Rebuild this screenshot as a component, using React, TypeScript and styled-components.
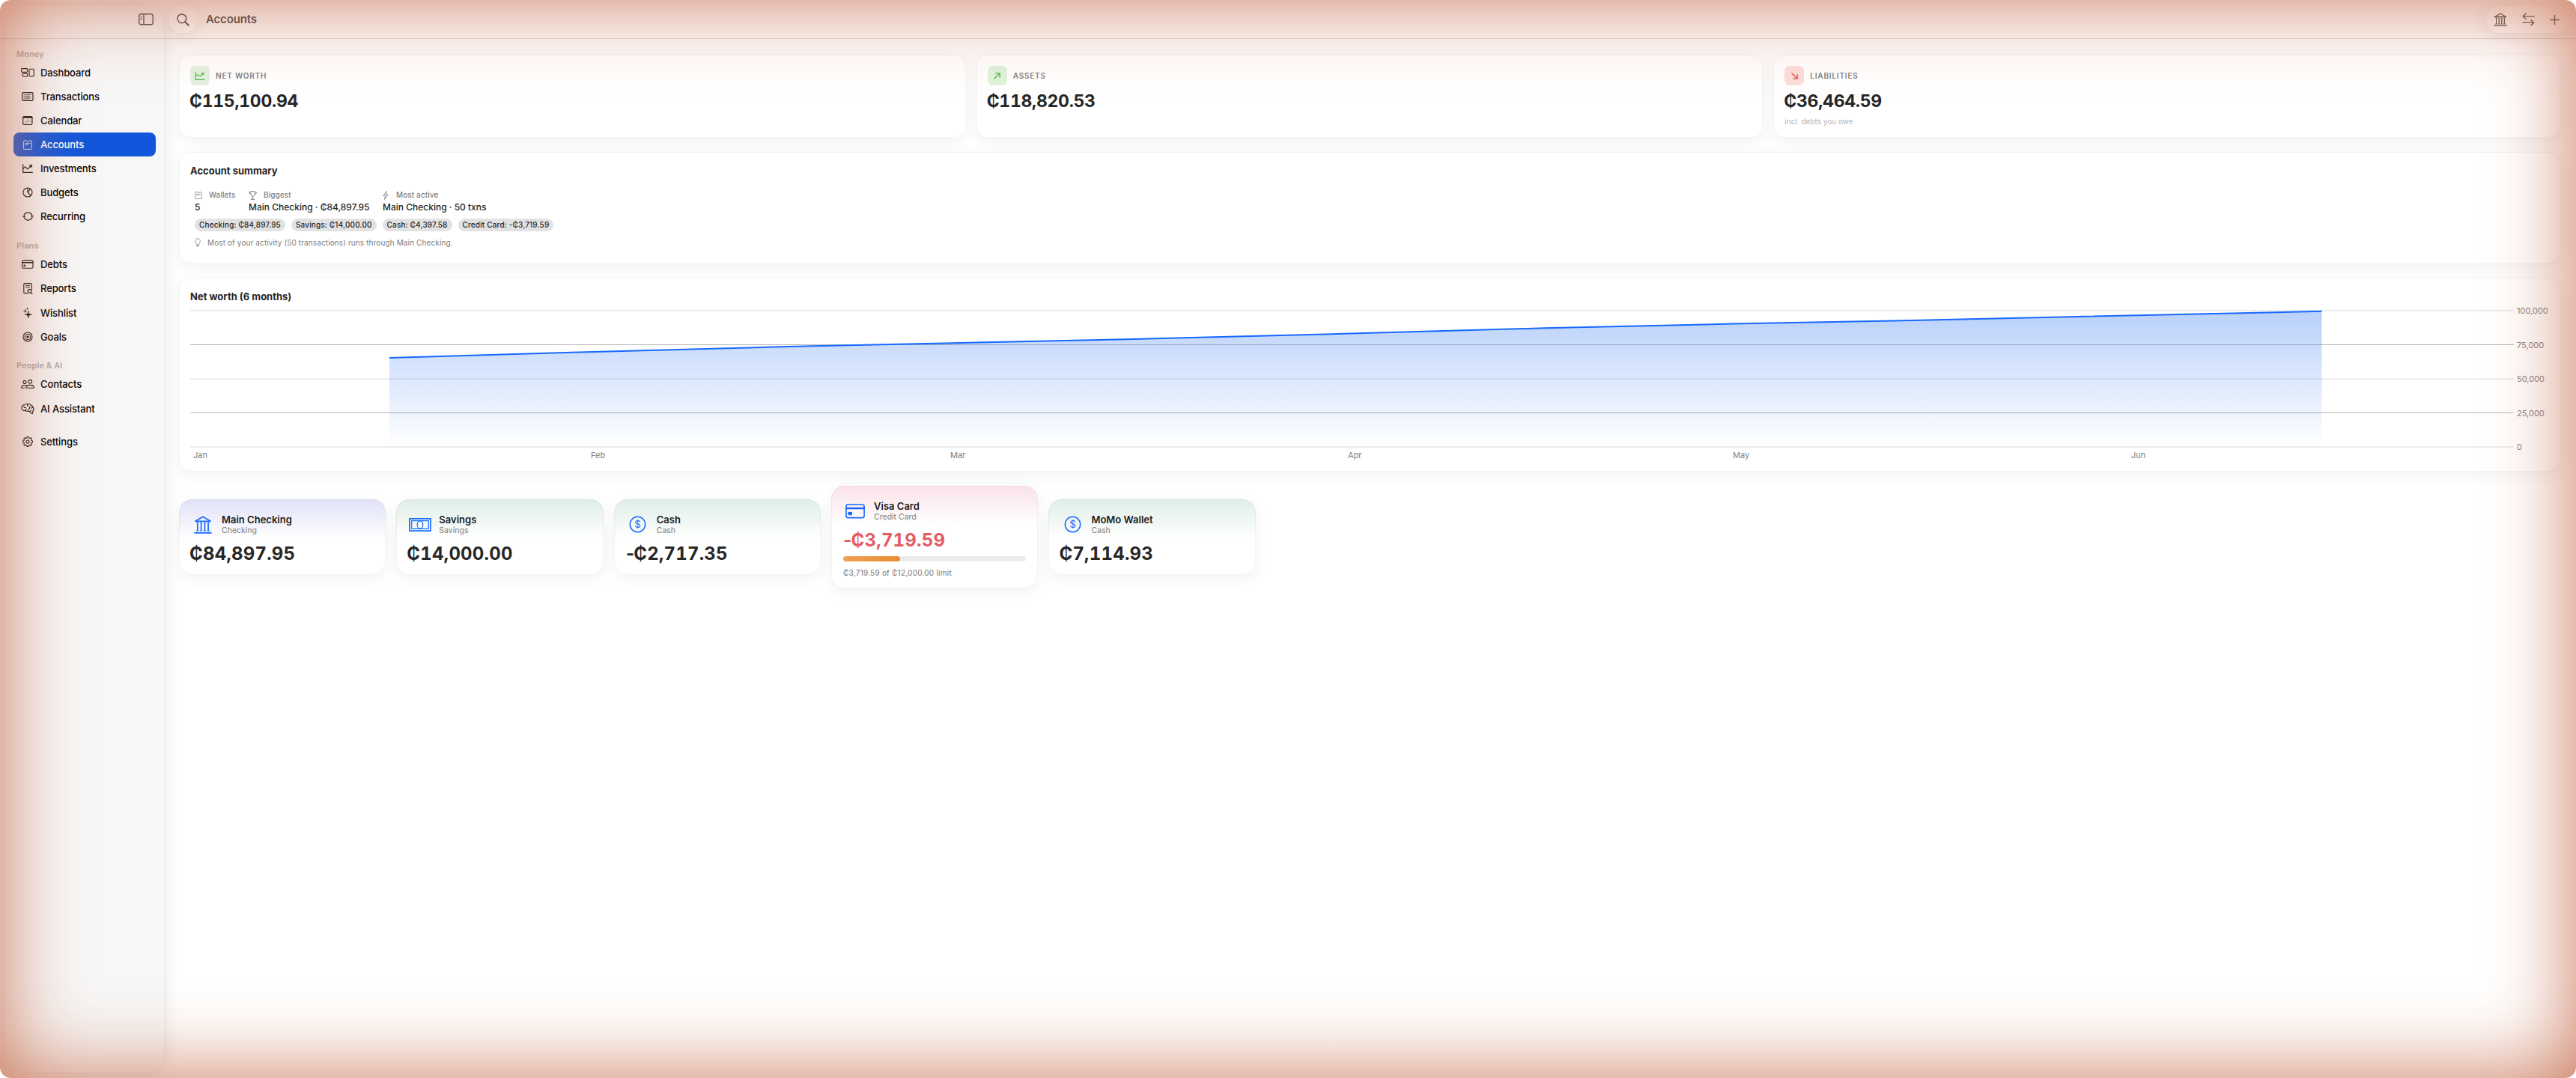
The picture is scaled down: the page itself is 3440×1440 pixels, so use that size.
import React, { FC, ReactNode } from "react";
import styled, { createGlobalStyle, css } from "styled-components";

const GlobalStyle = createGlobalStyle`
	* {
		box-sizing: border-box;
	}
	body {
		margin: 0;
		background: #fff;
		font-family: Inter, "Liberation Sans", sans-serif;
		color: #262626;
	}
`;

/* ---------- icons ---------- */

const Svg = styled.svg<{ $w: number; $h: number }>`
	display: block;
	flex: none;
	width: ${(p) => p.$w}px;
	height: ${(p) => p.$h}px;
	fill: none;
	stroke: currentColor;
	stroke-linecap: round;
	stroke-linejoin: round;
	overflow: visible;
`;

type IconProps = { w: number; h: number; sw?: number };

const icon =
	(viewBox: string, body: ReactNode, defaultStroke = 1.2): FC<IconProps> =>
	({ w, h, sw }) => (
		<Svg $w={w} $h={h} viewBox={viewBox} strokeWidth={sw ?? defaultStroke}>
			{body}
		</Svg>
	);

const SidebarIcon = icon(
	"0 0 20 16",
	<>
		<rect x='0.8' y='0.8' width='18.4' height='14' rx='2.6' />
		<path d='M7 1v13.6' />
		<path d='M3 4h1.6M3 6.3h1.6M3 8.6h1.6' strokeWidth='0.9' />
	</>,
	1.4
);
const SearchIcon = icon(
	"0 0 17 17",
	<>
		<circle cx='6.8' cy='6.8' r='5.9' />
		<path d='M11.2 11.2l4.6 4.6' strokeWidth='2' />
	</>,
	1.5
);
const DashboardIcon = icon(
	"0 0 18 12",
	<>
		<rect x='0.6' y='0.6' width='8' height='4.8' rx='0.9' />
		<rect x='2.2' y='7.4' width='6.4' height='3.8' rx='0.9' />
		<rect x='11' y='1.2' width='6.2' height='9.8' rx='0.9' />
	</>,
	1.1
);
const TransactionsIcon = icon(
	"0 0 16 12",
	<>
		<rect x='0.6' y='0.6' width='14.4' height='10.8' rx='1.4' />
		<path d='M3 3.4h1M5.4 3.4h7M3 5.2h1M5.4 5.2h5M3 7h1M5.4 7h7M3 8.8h1M5.4 8.8h5' strokeWidth='0.7' />
	</>,
	1.2
);
const CalendarIcon = icon(
	"0 0 14 12",
	<>
		<rect x='0.7' y='0.7' width='12.2' height='10.8' rx='1.4' />
		<path d='M1 1.8h11.6' strokeWidth='2' />
		<path d='M6 5.2h4.6M3.2 7.2h7.4M3.2 9.2h5' strokeWidth='1.1' strokeDasharray='0.7 1.5' strokeLinecap='butt' />
	</>,
	1.2
);
const WalletIcon = icon(
	"0 0 12 14",
	<>
		<path d='M2.6 1.2L1.9 2.2H1.4a.8.8 0 0 0-.8.8v9.6a.8.8 0 0 0 .8.8h9.2a.8.8 0 0 0 .8-.8V3a.8.8 0 0 0-.8-.8H9.8L9.2 1.2 8.2 2.2 6 3.4 3.8 2.2z' />
		<path d='M3 5.4h6M3 7.4h3.4' strokeWidth='0.9' />
	</>,
	1
);
const ChartIcon = icon(
	"0 0 14 12",
	<>
		<path d='M0.7 0.6v10.7h12.8' />
		<path d='M1 6.4l2-2.2c.6-.6 1-.5 1.5.1l1.6 2c.5.6.9.6 1.4 0L11 3' />
		<path d='M9 1.8l4-.8-.8 3.8z' fill='currentColor' strokeWidth='0.4' />
	</>,
	1.2
);
const PieIcon = icon(
	"0 0 14 14",
	<>
		<circle cx='7' cy='7' r='6' />
		<path d='M7 1v6l4.4 4.2M7 7l3.4-4.6' />
	</>,
	1.1
);
const RecurringIcon = icon(
	"0 0 15 14",
	<>
		<path d='M2.2 5.2A5.7 5.7 0 0 1 12.6 5.2M12.8 8.6A5.7 5.7 0 0 1 2.4 8.8' />
		<path d='M12.9 8.2l-1.7-2.1h3.4zM2.1 5.8L.4 7.9h3.4z' fill='currentColor' strokeWidth='0.3' />
	</>,
	1.2
);
const CardIcon = icon(
	"0 0 16 12",
	<>
		<rect x='0.6' y='0.9' width='14.4' height='10.4' rx='1.6' />
		<path d='M0.8 3.8h14' strokeWidth='1.5' />
		<rect x='2.8' y='7' width='2' height='1.8' rx='0.4' fill='currentColor' strokeWidth='0.6' />
	</>,
	1.1
);
const ReportIcon = icon(
	"0 0 13 15",
	<>
		<path d='M5.4 13.6H2a1.2 1.2 0 0 1-1.2-1.2V1.8A1.2 1.2 0 0 1 2 .6h8a1.2 1.2 0 0 1 1.2 1.2v7' />
		<path d='M3.4 3.6h5.2M3.4 5.8h5.2' strokeWidth='0.9' />
		<circle cx='8.4' cy='11' r='2.4' />
		<path d='M10.2 12.8l1.8 1.8' />
	</>,
	1.1
);
const WishIcon = icon(
	"0 0 12 14",
	<g fill='currentColor' stroke='none'>
		<path d='M6.8 4.6C7.1 8.2 7.8 8.8 11.6 9.2 7.8 9.6 7.1 10.3 6.8 14 6.5 10.3 5.8 9.6 2 9.2 5.8 8.8 6.5 8.2 6.8 4.6z' stroke='currentColor' strokeWidth='0.7' />
		<path d='M2.5 2.4c.2 1.8.5 2 2.3 2.2-1.8.2-2.1.5-2.3 2.3C2.3 5.1 2 4.8.2 4.6 2 4.4 2.3 4.2 2.5 2.4z' stroke='currentColor' strokeWidth='0.4' />
		<path d='M5.7 0c.1 1.1.3 1.3 1.4 1.4-1.1.1-1.3.3-1.4 1.4C5.6 1.7 5.4 1.5 4.3 1.4 5.4 1.3 5.6 1.1 5.7 0z' stroke='currentColor' strokeWidth='0.3' />
	</g>
);
const GoalIcon = icon(
	"0 0 14 14",
	<>
		<circle cx='7' cy='7' r='6' />
		<circle cx='7' cy='7' r='3.8' />
		<circle cx='7' cy='7' r='1.4' fill='currentColor' strokeWidth='0.5' />
	</>,
	1.1
);
const ContactsIcon = icon(
	"0 0 18 12",
	<>
		<circle cx='5' cy='3.4' r='2' />
		<circle cx='12.2' cy='2.8' r='2.4' />
		<path d='M7.6 11.2c-.6 0-.8-.4-.7-.8.4-1.8 2.6-3 5.3-3s4.9 1.2 5.3 3c.1.4-.1.8-.7.8z' />
		<path d='M4.8 11.2H1.1c-.5 0-.7-.3-.6-.7.4-1.8 2.2-3 4.6-3 .8 0 1.5.1 2.1.4' />
	</>,
	1.1
);
const BrainIcon = icon(
	"0 0 18 14",
	<>
		<path d='M2.2 8.4C.4 7.6.3 5.6 1.5 4.6 1.4 2.8 2.9 1.7 4.5 1.9 5.8.4 8 .4 9 1.2 10.6.3 12.6.8 13.3 2.2 15 2.5 15.9 3.8 15.7 5.2 17.2 6.2 17.4 8.2 16.3 9.4' />
		<path d='M2.2 8.4C3 9.8 4.8 10 6 9.3 7 10.3 8.6 10.5 9.8 9.9 10.9 10.2 11.8 10.8 12.6 11.8L14 13.3h1.7L15.5 10.9C16 10.5 16.3 10 16.3 9.4' />
		<path d='M3.8 4.6c.6.9 1.6 1.1 2.5.7M9 1.2C8.2 2.2 8.6 3.3 9.6 3.6M6 9.3c-.2-1 .4-1.8 1.4-2M12.9 4.4c-1.2.2-1.7 1.2-1.4 2.2-.8.2-1.3.8-1.3 1.6M15.7 5.2c-.8 0-1.3.5-1.5 1.1M13.6 8.8c-.6.5-.8 1-.7 1.7' />
	</>,
	1.1
);
const gearPath = (() => {
	const pts: string[] = [];
	for (let i = 0; i < 8; i++) {
		const at = (deg: number, r: number) => {
			const a = ((i * 45 + deg) * Math.PI) / 180;
			return `${(7 + r * Math.sin(a)).toFixed(2)} ${(7 - r * Math.cos(a)).toFixed(2)}`;
		};
		pts.push(at(-16, 5.2), at(-9, 6.5), at(9, 6.5), at(16, 5.2));
	}
	return `M${pts.join("L")}Z`;
})();
const GearIcon = icon(
	"0 0 14 14",
	<>
		<path d={gearPath} />
		<circle cx='7' cy='7' r='2' />
	</>,
	1.1
);
const BankIcon = icon(
	"0 0 24 24",
	<>
		<path d='M1.8 7.2L12 1.3l10.2 5.9z' />
		<path d='M4.9 9.6v9.8M9.6 9.6v9.8M14.4 9.6v9.8M19.1 9.6v9.8' strokeWidth='1.7' />
		<path d='M3.2 9.2h3M8.2 9.2h2.6M13.2 9.2h2.6M17.8 9.2h3M3.2 20h3M8.2 20h2.6M13.2 20h2.6M17.8 20h3' strokeWidth='1' />
		<path d='M1 22.8h22' strokeWidth='1.7' />
	</>,
	1.6
);
const SwapIcon = icon(
	"0 0 18 18",
	<path d='M17 4.6H1.5M5.4.8L1.3 4.6l4.1 3.9M1 13.4h15.5M12.6 9.5l4.1 3.9-4.1 3.9' />,
	1.5
);
const PlusIcon = icon("0 0 14 14", <path d='M7 .6v12.8M.6 7h12.8' />, 1.6);
const UpRightIcon = icon("0 0 10 10", <path d='M1 9L9 1M3 1h6v6' />, 1.5);
const DownRightIcon = icon("0 0 10 10", <path d='M1 1l8 8M9 3v6H3' />, 1.5);
const TrophyIcon = icon(
	"0 0 11 12",
	<path d='M3 .6h5v3.6c0 1.8-1 3-2.5 3S3 6 3 4.2zM3 1.6H.7c0 2 1 3.2 2.5 3.4M8 1.6h2.3c0 2-1 3.2-2.5 3.4M5.5 7.2v2.4M3.2 11.2c0-1 .8-1.5 2.3-1.5s2.3.5 2.3 1.5z' />,
	0.9
);
const BoltIcon = icon("0 0 8 12", <path d='M5.2.6L.8 6.6h2.6L2.6 11.4 7.2 5.2H4.4z' />, 0.9);
const BulbIcon = icon(
	"0 0 8 12",
	<path d='M2.4 8.6C2.2 7 .7 6 .7 3.9.7 2 2.1.7 4 .7s3.3 1.3 3.3 3.2C7.3 6 5.8 7 5.6 8.6zM2.6 10.2h2.8M3.2 11.4h1.6' />,
	0.8
);
const BanknoteIcon = icon(
	"0 0 30 18",
	<>
		<rect x='0.9' y='0.9' width='28.2' height='16.2' />
		<rect x='3.7' y='3.7' width='22.6' height='10.6' strokeWidth='1.2' />
		<ellipse cx='15' cy='9' rx='3.8' ry='5.2' strokeWidth='1.2' />
	</>,
	1.7
);

const CoinText = styled.text`
	font: 400 14px Inter, sans-serif;
	fill: currentColor;
	stroke: none;
	text-anchor: middle;
`;
const CoinIcon = icon(
	"0 0 24 24",
	<>
		<circle cx='12' cy='12' r='10.6' />
		<CoinText x='12' y='17'>
			$
		</CoinText>
	</>,
	1.6
);
const CreditIcon = icon(
	"0 0 26 20",
	<>
		<rect x='0.9' y='1' width='24.2' height='17.6' rx='2.6' />
		<path d='M1 6h24' strokeWidth='2.4' />
		<rect x='4.2' y='11.5' width='4' height='3' rx='0.6' fill='currentColor' />
	</>,
	1.6
);

/* ---------- window ---------- */

const Window = styled.div`
	position: relative;
	display: flex;
	flex-direction: column;
	width: 3440px;
	height: 1440px;
	border-radius: 14px;
	overflow: hidden;
	background: #fff;
`;

/* coral halo running along the inside of the window frame */
const Glow = styled.div`
	position: absolute;
	inset: 0;
	z-index: 10;
	border-radius: 14px;
	pointer-events: none;
	box-shadow: inset 0 0 112px rgb(200, 114, 84);
`;

const SidebarPanel = styled.div`
	position: absolute;
	left: 8px;
	top: 8px;
	bottom: 8px;
	width: 210px;
	border-radius: 24px;
	border: 1px solid #fff;
	background: #f7f7f7;
	box-shadow: 0 2px 24px rgba(0, 0, 0, 0.12);
`;

const TitleBar = styled.header`
	position: relative;
	z-index: 1;
	flex: none;
	display: flex;
	align-items: flex-start;
	height: 52px;
	padding: 8px 10px 0 185px;
	border-bottom: 1px solid rgba(0, 0, 0, 0.13);
	color: #4a4a4a;
`;

const ToggleButton = styled.button`
	width: 41px;
	height: 36px;
	padding: 0;
	border: none;
	background: none;
	color: inherit;
`;

const pill = css`
	border: 1px solid rgba(255, 255, 255, 0.6);
	border-radius: 18px;
	background: rgba(255, 255, 255, 0.3);
	box-shadow: 0 4px 22px rgba(0, 0, 0, 0.09);
`;

const SearchButton = styled.button`
	${pill}
	display: flex;
	align-items: center;
	justify-content: center;
	width: 37px;
	height: 36px;
	padding: 0;
	color: inherit;
`;

const PageTitle = styled.h1`
	flex: 1;
	margin: 0 0 0 12px;
	font-size: 15px;
	line-height: 36px;
	font-weight: 600;
	letter-spacing: -0.15px;
`;

const ActionPill = styled.div`
	${pill}
	display: flex;
	align-items: center;
	justify-content: space-between;
	width: 110px;
	height: 36px;
	padding: 0 11px 0 9px;
`;

const Columns = styled.div`
	flex: 1;
	display: flex;
	min-height: 0;
`;

/* ---------- sidebar ---------- */

const Nav = styled.nav`
	position: relative;
	width: 218px;
	flex: none;
	padding: 9px 10px 0 18px;
`;

const NavHeading = styled.div<{ $gap?: number }>`
	height: 20px;
	margin-top: ${(p) => p.$gap ?? 0}px;
	padding-left: 4px;
	font-size: 11px;
	line-height: 22px;
	font-weight: 600;
	letter-spacing: 0.1px;
	color: #b0acaa;
`;

const NavItem = styled.a<{ $active?: boolean; $height?: number; $gap?: number }>`
	display: flex;
	align-items: center;
	height: ${(p) => p.$height ?? 32}px;
	margin-top: ${(p) => p.$gap ?? 0}px;
	border-radius: 8px;
	font-size: 13px;
	font-weight: 500;
	letter-spacing: -0.1px;
	color: ${(p) => (p.$active ? "#fff" : "#000")};
	background: ${(p) => (p.$active ? "#1257db" : "transparent")};
`;

const NavIcon = styled.span<{ $active?: boolean }>`
	display: flex;
	justify-content: center;
	width: 38px;
	margin-right: -2px;
	color: ${(p) => (p.$active ? "#e8eefc" : "#120c0a")};
`;

/* ---------- content ---------- */

const Main = styled.main`
	flex: 1;
	min-width: 0;
	padding: 20px 21px 0 21px;
`;

const card = css`
	border: 1px solid rgba(0, 0, 0, 0.045);
	background: #fff;
	box-shadow: 0 5px 20px rgba(0, 0, 0, 0.055);
`;

const StatGrid = styled.section`
	display: grid;
	grid-template-columns: repeat(3, 1fr);
	gap: 14px;
`;

const StatCard = styled.div`
	${card}
	height: 112px;
	padding: 15px 14px;
	border-radius: 14px;
`;

const StatHead = styled.div`
	display: flex;
	align-items: center;
	gap: 8px;
	font-size: 10px;
	font-weight: 600;
	letter-spacing: 0.8px;
	color: #808080;
`;

const Badge = styled.span<{ $bg: string; $fg: string }>`
	display: flex;
	align-items: center;
	justify-content: center;
	width: 26px;
	height: 26px;
	border-radius: 7px;
	color: ${(p) => p.$fg};
	background: ${(p) => p.$bg};
`;

const StatValue = styled.div`
	margin: 7px 0 0 -1px;
	font-size: 23px;
	line-height: 28px;
	font-weight: 700;
	font-variant-numeric: tabular-nums;
	letter-spacing: -0.3px;
`;

const StatNote = styled.div`
	margin-top: 6px;
	font-size: 10px;
	line-height: 14px;
	color: #b4b4b4;
`;

const Panel = styled.section<{ $height: number }>`
	${card}
	height: ${(p) => p.$height}px;
	margin-top: 19px;
	padding: 15px 14px;
	border-radius: 16px;
`;

const PanelTitle = styled.h2`
	margin: 0;
	font-size: 13px;
	line-height: 18px;
	font-weight: 700;
`;

const SummaryBody = styled.div`
	padding: 15px 6px 0;
`;

const Facts = styled.div`
	display: flex;
	gap: 18px;
`;

const Fact = styled.div<{ $width?: number }>`
	width: ${(p) => (p.$width ? p.$width + "px" : "auto")};
	font-size: 12px;
	line-height: 15px;
	font-weight: 500;
	white-space: nowrap;
`;

const FactLabel = styled.div<{ $gap: number }>`
	display: flex;
	align-items: center;
	gap: ${(p) => p.$gap}px;
	height: 17px;
	font-size: 10px;
	font-weight: 500;
	letter-spacing: 0.1px;
	color: #808080;
`;

const Chips = styled.div`
	display: flex;
	gap: 8px;
	margin-top: 8px;
`;

const Chip = styled.span`
	height: 17px;
	padding: 0 6px;
	border-radius: 9px;
	background: #e2e2e2;
	font-size: 10px;
	line-height: 17px;
	font-weight: 500;
	letter-spacing: 0.15px;
`;

const Tip = styled.div`
	display: flex;
	align-items: center;
	gap: 9px;
	height: 16px;
	margin-top: 7px;
	font-size: 10px;
	letter-spacing: 0.12px;
	color: #808080;
`;

const ChartSvg = styled.svg`
	display: block;
	margin-top: 2px;
	width: 3150px;
	height: 210px;
	overflow: visible;
`;

const AxisText = styled.text`
	font: 400 11px Inter, sans-serif;
	fill: #808080;
`;

/* ---------- account cards ---------- */

const AccountGrid = styled.section`
	display: grid;
	grid-template-columns: repeat(auto-fill, minmax(270px, 1fr));
	align-items: center;
	gap: 14px;
	margin-top: 19px;
`;

const AccountCard = styled.div<{ $tint: string }>`
	${card}
	padding: 18px 15px 13px 14px;
	border-radius: 18px;
	background: linear-gradient(${(p) => p.$tint}, #fff 52px) border-box;
`;

const AccountHead = styled.div`
	display: flex;
	align-items: center;
	height: 29px;
`;

const AccountIcon = styled.div`
	display: flex;
	justify-content: center;
	width: 34px;
	margin-right: 8px;
	color: #1769ff;
`;

const AccountName = styled.div`
	font-size: 13px;
	line-height: 16px;
	font-weight: 600;
	color: #1c1c1c;
`;

const AccountKind = styled.div`
	font-size: 10.5px;
	line-height: 13px;
	color: #7c7c7c;
`;

const Balance = styled.div<{ $negative?: boolean }>`
	margin: 11px 0 0 -1px;
	font-size: 24px;
	line-height: 28px;
	font-weight: 700;
	font-variant-numeric: tabular-nums;
	letter-spacing: 0.2px;
	color: ${(p) => (p.$negative ? "#e25c62" : "#262626")};
`;

const Minus = styled.span`
	letter-spacing: -3px;
`;

const Track = styled.div`
	height: 7px;
	margin: 7px 0 0 1px;
	border-radius: 3.5px;
	background: #ececec;
	overflow: hidden;
`;

const Fill = styled.div`
	height: 100%;
	border-radius: 3.5px;
	background: linear-gradient(90deg, #efa055, #ea8c30);
`;

const LimitText = styled.div`
	margin-top: 8px;
	padding-left: 1px;
	font-size: 10px;
	line-height: 14px;
	letter-spacing: 0.23px;
	color: #777;
`;

/* ---------- data ---------- */

type NavEntry = {
	label: string;
	Icon: FC<IconProps>;
	w: number;
	h: number;
	height?: number;
	gap?: number;
	active?: boolean;
};

const moneyItems: NavEntry[] = [
	{ label: "Dashboard", Icon: DashboardIcon, w: 18, h: 12 },
	{ label: "Transactions", Icon: TransactionsIcon, w: 16, h: 12 },
	{ label: "Calendar", Icon: CalendarIcon, w: 14, h: 12 },
	{ label: "Accounts", Icon: WalletIcon, w: 12, h: 14, active: true },
	{ label: "Investments", Icon: ChartIcon, w: 14, h: 12 },
	{ label: "Budgets", Icon: PieIcon, w: 14, h: 14 },
	{ label: "Recurring", Icon: RecurringIcon, w: 15, h: 14 },
];

const planItems: NavEntry[] = [
	{ label: "Debts", Icon: CardIcon, w: 16, h: 12 },
	{ label: "Reports", Icon: ReportIcon, w: 13, h: 15 },
	{ label: "Wishlist", Icon: WishIcon, w: 12, h: 14, height: 34 },
	{ label: "Goals", Icon: GoalIcon, w: 14, h: 14, height: 30 },
];

const peopleItems: NavEntry[] = [
	{ label: "Contacts", Icon: ContactsIcon, w: 18, h: 12 },
	{ label: "AI Assistant", Icon: BrainIcon, w: 18, h: 14, height: 34 },
	{ label: "Settings", Icon: GearIcon, w: 14, h: 14, gap: 11 },
];

const stats = [
	{ label: "NET WORTH", value: "₵115,100.94", bg: "#e4f1e1", fg: "#4fb94a", mark: <ChartIcon w={14} h={11} /> },
	{ label: "ASSETS", value: "₵118,820.53", bg: "#dff3dc", fg: "#4fb94a", mark: <UpRightIcon w={9} h={9} /> },
	{
		label: "LIABILITIES",
		value: "₵36,464.59",
		bg: "#fbdedc",
		fg: "#ec4a40",
		mark: <DownRightIcon w={9} h={9} />,
		note: "incl. debts you owe",
	},
];

const chips = ["Checking: ₵84,897.95", "Savings: ₵14,000.00", "Cash: ₵4,397.58", "Credit Card: -₵3,719.59"];

const GREEN = "#dfeee6";
const accounts = [
	{ name: "Main Checking", kind: "Checking", value: "₵84,897.95", tint: "#e0e1f8", mark: <BankIcon w={24} h={24} /> },
	{ name: "Savings", kind: "Savings", value: "₵14,000.00", tint: GREEN, mark: <BanknoteIcon w={30} h={18} /> },
	{ name: "Cash", kind: "Cash", value: "-₵2,717.35", tint: GREEN, mark: <CoinIcon w={23} h={23} /> },
	{
		name: "Visa Card",
		kind: "Credit Card",
		value: "-₵3,719.59",
		tint: "#fae2e8",
		mark: <CreditIcon w={26} h={20} />,
		used: 3719.59,
		limit: 12000,
		limitText: "₵3,719.59 of ₵12,000.00 limit",
	},
	{ name: "MoMo Wallet", kind: "Cash", value: "₵7,114.93", tint: GREEN, mark: <CoinIcon w={23} h={23} /> },
];

const gridLines = [
	{ label: "100,000", y: 8, strong: false },
	{ label: "75,000", y: 53.5, strong: true },
	{ label: "50,000", y: 99, strong: false },
	{ label: "25,000", y: 144.5, strong: true },
	{ label: "0", y: 190, strong: false },
];

const months = [
	{ label: "Jan", x: 4 },
	{ label: "Feb", x: 535 },
	{ label: "Mar", x: 1015 },
	{ label: "Apr", x: 1546 },
	{ label: "May", x: 2060 },
	{ label: "Jun", x: 2592 },
];

const netWorth = "266,71 520,63.4 797,56 1040,50.8 1277,45.6 1540,38.8 1808,31.3 2060,25.6 2321,20.5 2846.5,8.8";

const NavList: FC<{ items: NavEntry[] }> = ({ items }) => (
	<>
		{items.map(({ label, Icon, w, h, height, gap, active }) => (
			<NavItem key={label} $active={active} $height={height} $gap={gap}>
				<NavIcon $active={active}>
					<Icon w={w} h={h} />
				</NavIcon>
				{label}
			</NavItem>
		))}
	</>
);

const NetWorthChart: FC = () => (
	<ChartSvg viewBox='0 0 3150 210'>
		<defs>
			<linearGradient id='area' x1='0' y1='8' x2='0' y2='190' gradientUnits='userSpaceOnUse'>
				<stop offset='0' stopColor='#1463f0' stopOpacity='0.3' />
				<stop offset='1' stopColor='#1463f0' stopOpacity='0' />
			</linearGradient>
		</defs>
		{gridLines.map((g) => (
			<g key={g.label}>
				<path d={`M0 ${g.y}H3103`} stroke={g.strong ? "#b6b6b6" : "#ededed"} strokeWidth={g.strong ? 1 : 2} />
				<AxisText x='3107' y={g.y + 4}>
					{g.label}
				</AxisText>
			</g>
		))}
		<polygon points={`266,190 ${netWorth} 2846.5,190`} fill='url(#area)' />
		<polyline points={netWorth} fill='none' stroke='#1769ff' strokeWidth='2' />
		{months.map((m) => (
			<AxisText key={m.label} x={m.x} y='205'>
				{m.label}
			</AxisText>
		))}
	</ChartSvg>
);

const App: FC = () => (
	<>
		<GlobalStyle />
		<Window>
			<SidebarPanel />
			<TitleBar>
				<ToggleButton>
					<SidebarIcon w={20} h={16} />
				</ToggleButton>
				<SearchButton>
					<SearchIcon w={17} h={17} />
				</SearchButton>
				<PageTitle>Accounts</PageTitle>
				<ActionPill>
					<BankIcon w={18} h={18} />
					<SwapIcon w={17} h={18} />
					<PlusIcon w={13} h={13} />
				</ActionPill>
			</TitleBar>
			<Columns>
				<Nav>
					<NavHeading>Money</NavHeading>
					<NavList items={moneyItems} />
					<NavHeading $gap={12}>Plans</NavHeading>
					<NavList items={planItems} />
					<NavHeading $gap={12}>People &amp; AI</NavHeading>
					<NavList items={peopleItems} />
				</Nav>
				<Main>
					<StatGrid>
						{stats.map((s) => (
							<StatCard key={s.label}>
								<StatHead>
									<Badge $bg={s.bg} $fg={s.fg}>
										{s.mark}
									</Badge>
									{s.label}
								</StatHead>
								<StatValue>{s.value}</StatValue>
								{s.note && <StatNote>{s.note}</StatNote>}
							</StatCard>
						))}
					</StatGrid>

					<Panel $height={149}>
						<PanelTitle>Account summary</PanelTitle>
						<SummaryBody>
							<Facts>
								<Fact $width={54}>
									<FactLabel $gap={9}>
										<WalletIcon w={10} h={11} />
										Wallets
									</FactLabel>
									5
								</Fact>
								<Fact $width={161}>
									<FactLabel $gap={9}>
										<TrophyIcon w={11} h={12} />
										Biggest
									</FactLabel>
									Main Checking · ₵84,897.95
								</Fact>
								<Fact>
									<FactLabel $gap={10}>
										<BoltIcon w={8} h={12} />
										Most active
									</FactLabel>
									Main Checking · 50 txns
								</Fact>
							</Facts>
							<Chips>
								{chips.map((c) => (
									<Chip key={c}>{c}</Chip>
								))}
							</Chips>
							<Tip>
								<BulbIcon w={8} h={12} />
								Most of your activity (50 transactions) runs through Main Checking.
							</Tip>
						</SummaryBody>
					</Panel>

					<Panel $height={259}>
						<PanelTitle>Net worth (6 months)</PanelTitle>
						<NetWorthChart />
					</Panel>

					<AccountGrid>
						{accounts.map((a) => (
							<AccountCard key={a.name} $tint={a.tint}>
								<AccountHead>
									<AccountIcon>{a.mark}</AccountIcon>
									<div>
										<AccountName>{a.name}</AccountName>
										<AccountKind>{a.kind}</AccountKind>
									</div>
								</AccountHead>
								<Balance $negative={!!a.limit}>
									{a.value.startsWith("-") && <Minus>-</Minus>}
									{a.value.replace("-", "")}
								</Balance>
								{a.limit && (
									<>
										<Track>
											<Fill style={{ width: `${(a.used / a.limit) * 100}%` }} />
										</Track>
										<LimitText>{a.limitText}</LimitText>
									</>
								)}
							</AccountCard>
						))}
					</AccountGrid>
				</Main>
			</Columns>
			<Glow />
		</Window>
	</>
);

export default App;
